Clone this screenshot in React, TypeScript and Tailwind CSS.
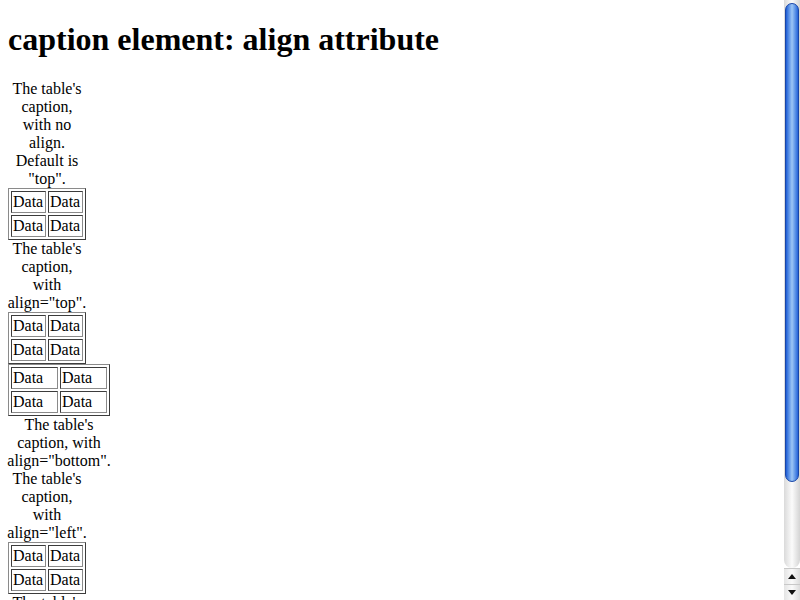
import React from 'react'

interface Block {
  caption: string[]
  wide?: boolean
  bottom?: boolean
}

const blocks: Block[] = [
  { caption: ["The table's", 'caption,', 'with no', 'align.', 'Default is', '"top".'] },
  { caption: ["The table's", 'caption,', 'with', 'align="top".'] },
  { caption: ["The table's", 'caption, with', 'align="bottom".'], wide: true, bottom: true },
  { caption: ["The table's", 'caption,', 'with', 'align="left".'] },
  { caption: ["The table's", 'caption,', 'with', 'align="right".'] }
]

function Caption({ lines, wide }: { lines: string[]; wide?: boolean }) {
  return (
    <div className={`${wide ? 'w-[102px]' : 'w-[78px]'} flex flex-col items-center text-center`}>
      {lines.map((l, i) => (
        <span key={i} className="block whitespace-nowrap leading-[18px] h-[18px]">{l}</span>
      ))}
    </div>
  )
}

function DataTable({ wide }: { wide?: boolean }) {
  return (
    <div
      className={`${wide ? 'w-[102px]' : 'w-[78px]'} grid grid-cols-2 gap-[2px] p-[2px] border border-t-[#8a8a8a] border-l-[#8a8a8a] border-r-[#3c3c3c] border-b-[#3c3c3c]`}
    >
      {[0, 1, 2, 3].map(i => (
        <div
          key={i}
          className="h-[22px] px-[1px] py-[1px] leading-[18px] border border-t-[#3c3c3c] border-l-[#3c3c3c] border-r-[#8a8a8a] border-b-[#8a8a8a]"
        >
          Data
        </div>
      ))}
    </div>
  )
}

function Arrow({ up }: { up?: boolean }) {
  return (
    <div className="h-[16px] flex items-center justify-center bg-gradient-to-r from-[#e4e4e4] via-[#fafafa] to-[#dcdcdc] border-t border-[#c8c8c8]">
      <svg width="8" height="5" viewBox="0 0 8 5">
        <polygon points={up ? '0,5 8,5 4,0' : '0,0 8,0 4,5'} fill="#111" />
      </svg>
    </div>
  )
}

export default function App() {
  return (
    <div className="w-[800px] h-[600px] flex bg-white overflow-hidden text-black" style={{ fontFamily: '"Liberation Serif", "Times New Roman", serif' }}>
      <div className="flex-1 overflow-hidden pl-[8px]">
        <h1 className="mt-[21px] mb-[22px] text-[32px] leading-[37px] font-bold">caption element: align attribute</h1>
        <div className="flex flex-col items-start text-[16px]">
          {blocks.map((b, i) => (
            <div key={i} className="flex flex-col">
              {!b.bottom && <Caption lines={b.caption} wide={b.wide} />}
              <DataTable wide={b.wide} />
              {b.bottom && <Caption lines={b.caption} wide={b.wide} />}
            </div>
          ))}
        </div>
      </div>

      {/* scrollbar */}
      <div className="w-[16px] h-[600px] flex flex-col bg-white">
        <div className="flex-1 flex flex-col px-[1px] pb-[1px] bg-gradient-to-r from-[#dadada] via-[#fbfbfb] to-[#d4d4d4] rounded-b-[8px]">
          <div className="h-[3px]" />
          <div className="h-[479px] rounded-[7px] border border-[#1846a8] bg-gradient-to-r from-[#1c5bd4] via-[#9cc6f5] to-[#2463d8]" />
        </div>
        <Arrow up />
        <Arrow />
      </div>
    </div>
  )
}
